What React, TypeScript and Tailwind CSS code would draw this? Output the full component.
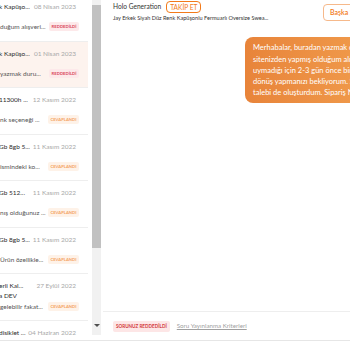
import React from "react";

type Row = {
  title: string;
  extra?: string;
  date: string;
  sub: string;
  status?: "red" | "ok";
  active?: boolean;
};

const rows: Row[] = [
  { title: "k Kapüşo...", date: "08 Nisan 2023", sub: "duğum alışveri...", status: "red" },
  { title: "k Kapüşo...", date: "01 Nisan 2023", sub: "yazmak duru...", status: "red", active: true },
  { title: "11300h ...", date: "12 Kasım 2022", sub: "nk seçeneği ...", status: "ok" },
  { title: "Gb 8gb 5...", date: "11 Kasım 2022", sub: "ismindeki ko...", status: "ok" },
  { title: "Gb 512...", date: "11 Kasım 2022", sub: "nış olduğunuz ...", status: "ok" },
  { title: "Gb 8gb 5...", date: "11 Kasım 2022", sub: "Ürün özellikle...", status: "ok" },
  { title: "erli Kal...", extra: "a DEV", date: "27 Eylül 2022", sub: "gelebilir fakat...", status: "ok" },
  { title: "disiklet ...", date: "04 Haziran 2022", sub: "" },
];

function Badge({ status }: { status: "red" | "ok" }) {
  if (status === "red") {
    return (
      <span className="shrink-0 rounded-[2px] bg-[#fde9ea] px-[2.5px] text-[4.2px] font-bold leading-[9px] text-[#d9475a]">
        REDDEDİLDİ
      </span>
    );
  }
  return (
    <span className="shrink-0 rounded-[2px] bg-[#fef2e8] px-[2.5px] text-[4.2px] font-bold leading-[9px] text-[#f4a262]">
      CEVAPLANDI
    </span>
  );
}

function ListRow({ row }: { row: Row }) {
  return (
    <div
      className={`flex h-[46.5px] flex-col justify-center border-b border-[#eeeeee] pb-[2px] pr-[9px] ${
        row.active ? "bg-[#fdf3ee]" : "bg-white"
      }`}
    >
      <div className="flex items-center justify-between leading-[11px]">
        <span className="-ml-[1px] whitespace-nowrap text-[6.5px] text-[#2b2b2b]">{row.title}</span>
        <span className="mr-[3px] whitespace-nowrap text-[6.5px] text-[#a8a8a8]">{row.date}</span>
      </div>
      {row.extra && (
        <div className="-ml-[1px] text-[6.5px] leading-[10px] text-[#2b2b2b]">{row.extra}</div>
      )}
      <div className={`flex h-[11px] items-center justify-between leading-[11px] ${row.extra ? "" : "mt-[9px]"}`}>
        <span className="whitespace-nowrap text-[6.5px] text-[#555555]">{row.sub}</span>
        {row.status && <Badge status={row.status} />}
      </div>
    </div>
  );
}

export default function App() {
  return (
    <div className="h-[350px] w-[350px] overflow-hidden bg-white font-['Lato',sans-serif]">
      <div className="flex h-[341px] border-b border-[#e6e6e6]">
        {/* left list */}
        <div className="w-[88px] shrink-0 overflow-hidden">
          <div className="-mt-[5px]">
            {rows.map((r, i) => (
              <ListRow key={i} row={r} />
            ))}
          </div>
        </div>

        {/* scrollbar */}
        <div className="ml-[4px] flex h-[335px] w-[9px] shrink-0 flex-col bg-[#f1f1f1]">
          <div className="mt-[5px] h-[243px] bg-[#c1c1c1]" />
          <div className="flex-1" />
          <div className="mb-[8px] flex justify-center">
            <div className="h-0 w-0 border-x-[3px] border-t-[3px] border-x-transparent border-t-[#505050]" />
          </div>
        </div>

        {/* right panel */}
        <div className="ml-[2px] flex w-[300px] shrink-0 flex-col">
          <div className="flex items-start justify-between">
            <div className="pl-[10px] pt-[1px]">
              <div className="flex items-center gap-[5px]">
                <span className="text-[6.6px] text-[#333333]">Holo Generation</span>
                <span className="rounded-[4px] border border-[#f27a1a] px-[3px] text-[6.6px] leading-[10px] text-[#f27a1a]">
                  TAKİP ET
                </span>
              </div>
              <div className="mt-[1px] whitespace-nowrap text-[5.6px] text-[#333333]">
                Jay Erkek Siyah Düz Renk Kapüşonlu Fermuarlı Oversize Swea...
              </div>
            </div>
            <div className="mr-[10px] mt-[4px] flex h-[17px] w-[70px] shrink-0 items-center rounded-[4px] border border-[#f6b98b] pl-[6px] text-[7px] font-semibold text-[#f27a1a]">
              Başka Soru Sor
            </div>
          </div>

          <div className="ml-[142px] mt-[15px] overflow-hidden whitespace-nowrap rounded-[8px] bg-linear-to-r from-[#e8843a] to-[#f2a150] py-[5px] pl-[8px] text-[7.5px] leading-[11.2px] text-white">
            <div>Merhabalar, buradan yazmak durumunda kaldım. Sizin</div>
            <div>sitenizden yapmış olduğum alışverişte ürün bedenime</div>
            <div>uymadığı için 2-3 gün önce bir iade talebi oluşturdum,</div>
            <div>dönüş yapmanızı bekliyorum. Sipariş üzerinden iade</div>
            <div>talebi de oluşturdum. Sipariş Numarası: 7264</div>
          </div>

          <div className="flex-1" />

          <div className="flex h-[29px] items-center border-t border-[#eeeeee] pl-[10px]">
            <span className="rounded-[2px] bg-[#fde6e6] px-[3px] text-[4.6px] font-bold leading-[11px] text-[#d2383c]">
              SORUNUZ REDDEDİLDİ
            </span>
            <span className="ml-[7px] text-[6.2px] text-[#a0a0a0] underline">Soru Yayınlanma Kriterleri</span>
          </div>
        </div>
      </div>
    </div>
  );
}
